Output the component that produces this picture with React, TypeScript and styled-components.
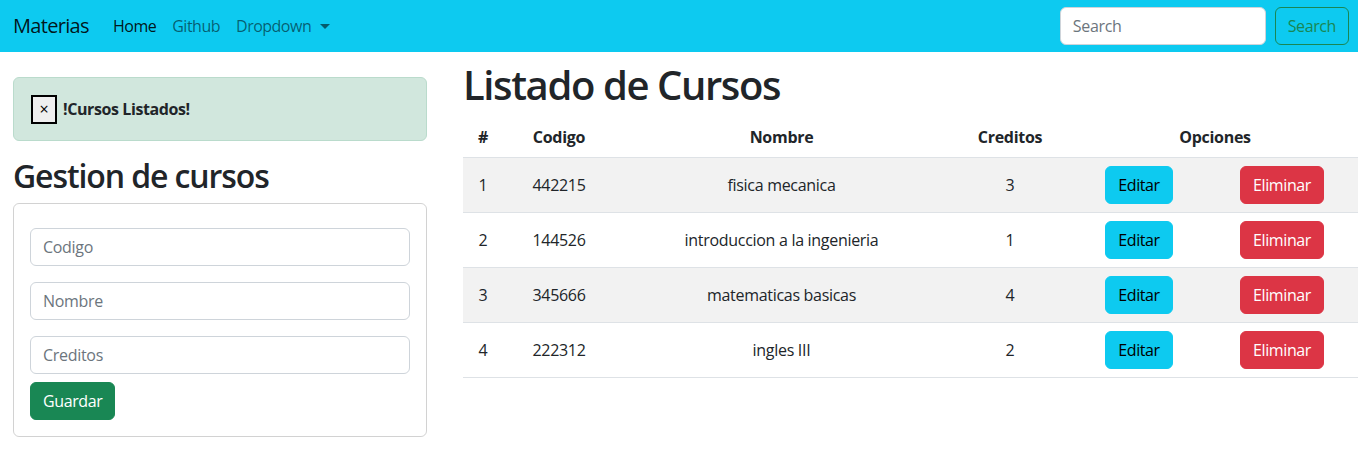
import React from 'react'
import styled, { createGlobalStyle } from 'styled-components'

const GlobalStyle = createGlobalStyle`
  body {
    margin: 0;
    font-family: "Open Sans", "Noto Sans", sans-serif;
    font-size: 16px;
    line-height: 1.5;
    color: #212529;
    background: #fff;
  }
  * { box-sizing: border-box; }
`

interface Curso {
  id: number;
  codigo: string;
  nombre: string;
  creditos: number;
}

const cursos: Curso[] = [
  { id: 1, codigo: '442215', nombre: 'fisica mecanica', creditos: 3 },
  { id: 2, codigo: '144526', nombre: 'introduccion a la ingenieria', creditos: 1 },
  { id: 3, codigo: '345666', nombre: 'matematicas basicas', creditos: 4 },
  { id: 4, codigo: '222312', nombre: 'ingles III', creditos: 2 }
]

const Navbar = styled.nav`
  height: 52px;
  background: #0dcaf0;
  display: flex;
  align-items: center;
  padding: 0 9px 0 13px;
`
const Brand = styled.a`
  font-size: 20px;
  color: rgba(0,0,0,.9);
  margin-right: 16px;
  letter-spacing: -0.7px;
  width: 76px;
`
const NavList = styled.div`
  display: flex;
  align-items: center;
  flex: 1;
`
const NavLink = styled.a<{ active?: boolean }>`
  padding: 8px;
  font-size: 16px;
  letter-spacing: -0.5px;
  color: ${({ active }) => active ? 'rgba(0,0,0,.9)' : 'rgba(0,0,0,.55)'};
  display: flex;
  align-items: center;
`
const Caret = styled.span`
  display: inline-block;
  margin-left: 9px;
  border-top: 5px solid rgba(0,0,0,.55);
  border-left: 5px solid transparent;
  border-right: 5px solid transparent;
`
const SearchForm = styled.form`
  display: flex;
  gap: 9px;
`
const Input = styled.input<{ w?: number }>`
  width: ${({ w }) => w ? w + 'px' : '100%'};
  height: 38px;
  padding: 6px 12px;
  font-family: inherit;
  font-size: 16px;
  color: #212529;
  border: 1px solid #ced4da;
  border-radius: 6px;
  background: #fff;
  outline: none;
  letter-spacing: -0.3px;
  &::placeholder { color: #6c757d; }
`
const Button = styled.button<{ variant: 'info' | 'danger' | 'success' | 'outline' }>`
  height: 38px;
  padding: 0 12px;
  font-family: inherit;
  font-size: 16px;
  letter-spacing: -0.4px;
  border-radius: 6px;
  cursor: pointer;
  border: 1px solid ${({ variant }) =>
    variant === 'info' ? '#0dcaf0' : variant === 'danger' ? '#dc3545' : '#198754'};
  background: ${({ variant }) =>
    variant === 'info' ? '#0dcaf0' : variant === 'danger' ? '#dc3545' : variant === 'success' ? '#198754' : 'transparent'};
  color: ${({ variant }) =>
    variant === 'info' ? '#000' : variant === 'outline' ? '#198754' : '#fff'};
`

const Page = styled.div`
  display: flex;
`
const LeftCol = styled.div`
  width: 440px;
  flex-shrink: 0;
  padding: 25px 13px 0 13px;
`
const RightCol = styled.div`
  flex: 1;
  padding: 9px 0 0 23px;
`
const Alert = styled.div`
  display: flex;
  align-items: center;
  gap: 6px;
  height: 64px;
  padding: 0 16px;
  background: #d1e7dd;
  border: 1px solid #badbcc;
  border-radius: 6px;
  margin-bottom: 16px;
  font-weight: 700;
  letter-spacing: -0.4px;
`
const CloseButton = styled.button`
  width: 26px;
  height: 29px;
  margin-left: 1px;
  padding: 0;
  border: 2px solid #000;
  background: #efefef;
  font-size: 16px;
  line-height: 1;
  color: #000;
  font-family: inherit;
`
const Title2 = styled.h2`
  font-size: 32px;
  font-weight: 600;
  line-height: 1.2;
  margin: 0 0 8px;
  letter-spacing: -1.1px;
`
const Title1 = styled.h1`
  font-size: 40px;
  font-weight: 600;
  line-height: 1.2;
  margin: 0 0 8px;
  letter-spacing: -1.4px;
`
const Card = styled.div`
  border: 1px solid rgba(0,0,0,.175);
  border-radius: 6px;
  padding: 24px 16px 16px;
  display: flex;
  flex-direction: column;
  gap: 16px;
`
const FormFooter = styled.div`
  margin-top: -8px;
`
const Table = styled.table`
  width: 100%;
  border-collapse: collapse;
  table-layout: fixed;
  text-align: center;
  letter-spacing: -0.3px;
`
const Th = styled.th`
  height: 40px;
  font-weight: 700;
  padding: 8px;
  border-bottom: 1px solid #dee2e6;
`
const Row = styled.tr<{ striped: boolean }>`
  background: ${({ striped }) => striped ? '#f2f2f2' : '#fff'};
`
const Td = styled.td`
  height: 55px;
  padding: 8px;
  border-bottom: 1px solid #dee2e6;
`

export default function App() {
  return (
    <>
      <GlobalStyle />
      <Navbar>
        <Brand>Materias</Brand>
        <NavList>
          <NavLink active>Home</NavLink>
          <NavLink>Github</NavLink>
          <NavLink>Dropdown<Caret /></NavLink>
        </NavList>
        <SearchForm onSubmit={e => e.preventDefault()}>
          <Input w={206} placeholder="Search" />
          <Button variant="outline">Search</Button>
        </SearchForm>
      </Navbar>
      <Page>
        <LeftCol>
          <Alert>
            <CloseButton>×</CloseButton>
            !Cursos Listados!
          </Alert>
          <Title2>Gestion de cursos</Title2>
          <Card>
            <Input placeholder="Codigo" />
            <Input placeholder="Nombre" />
            <Input placeholder="Creditos" />
            <FormFooter>
              <Button variant="success">Guardar</Button>
            </FormFooter>
          </Card>
        </LeftCol>
        <RightCol>
          <Title1>Listado de Cursos</Title1>
          <Table>
            <colgroup>
              <col style={{ width: 40 }} />
              <col style={{ width: 112 }} />
              <col style={{ width: 333 }} />
              <col style={{ width: 124 }} />
              <col style={{ width: 134 }} />
              <col style={{ width: 152 }} />
            </colgroup>
            <thead>
              <tr>
                <Th>#</Th>
                <Th>Codigo</Th>
                <Th>Nombre</Th>
                <Th>Creditos</Th>
                <Th colSpan={2}>Opciones</Th>
              </tr>
            </thead>
            <tbody>
              {cursos.map((c, i) => (
                <Row key={c.id} striped={i % 2 === 0}>
                  <Td>{c.id}</Td>
                  <Td>{c.codigo}</Td>
                  <Td>{c.nombre}</Td>
                  <Td>{c.creditos}</Td>
                  <Td><Button variant="info">Editar</Button></Td>
                  <Td><Button variant="danger">Eliminar</Button></Td>
                </Row>
              ))}
            </tbody>
          </Table>
        </RightCol>
      </Page>
    </>
  )
}
